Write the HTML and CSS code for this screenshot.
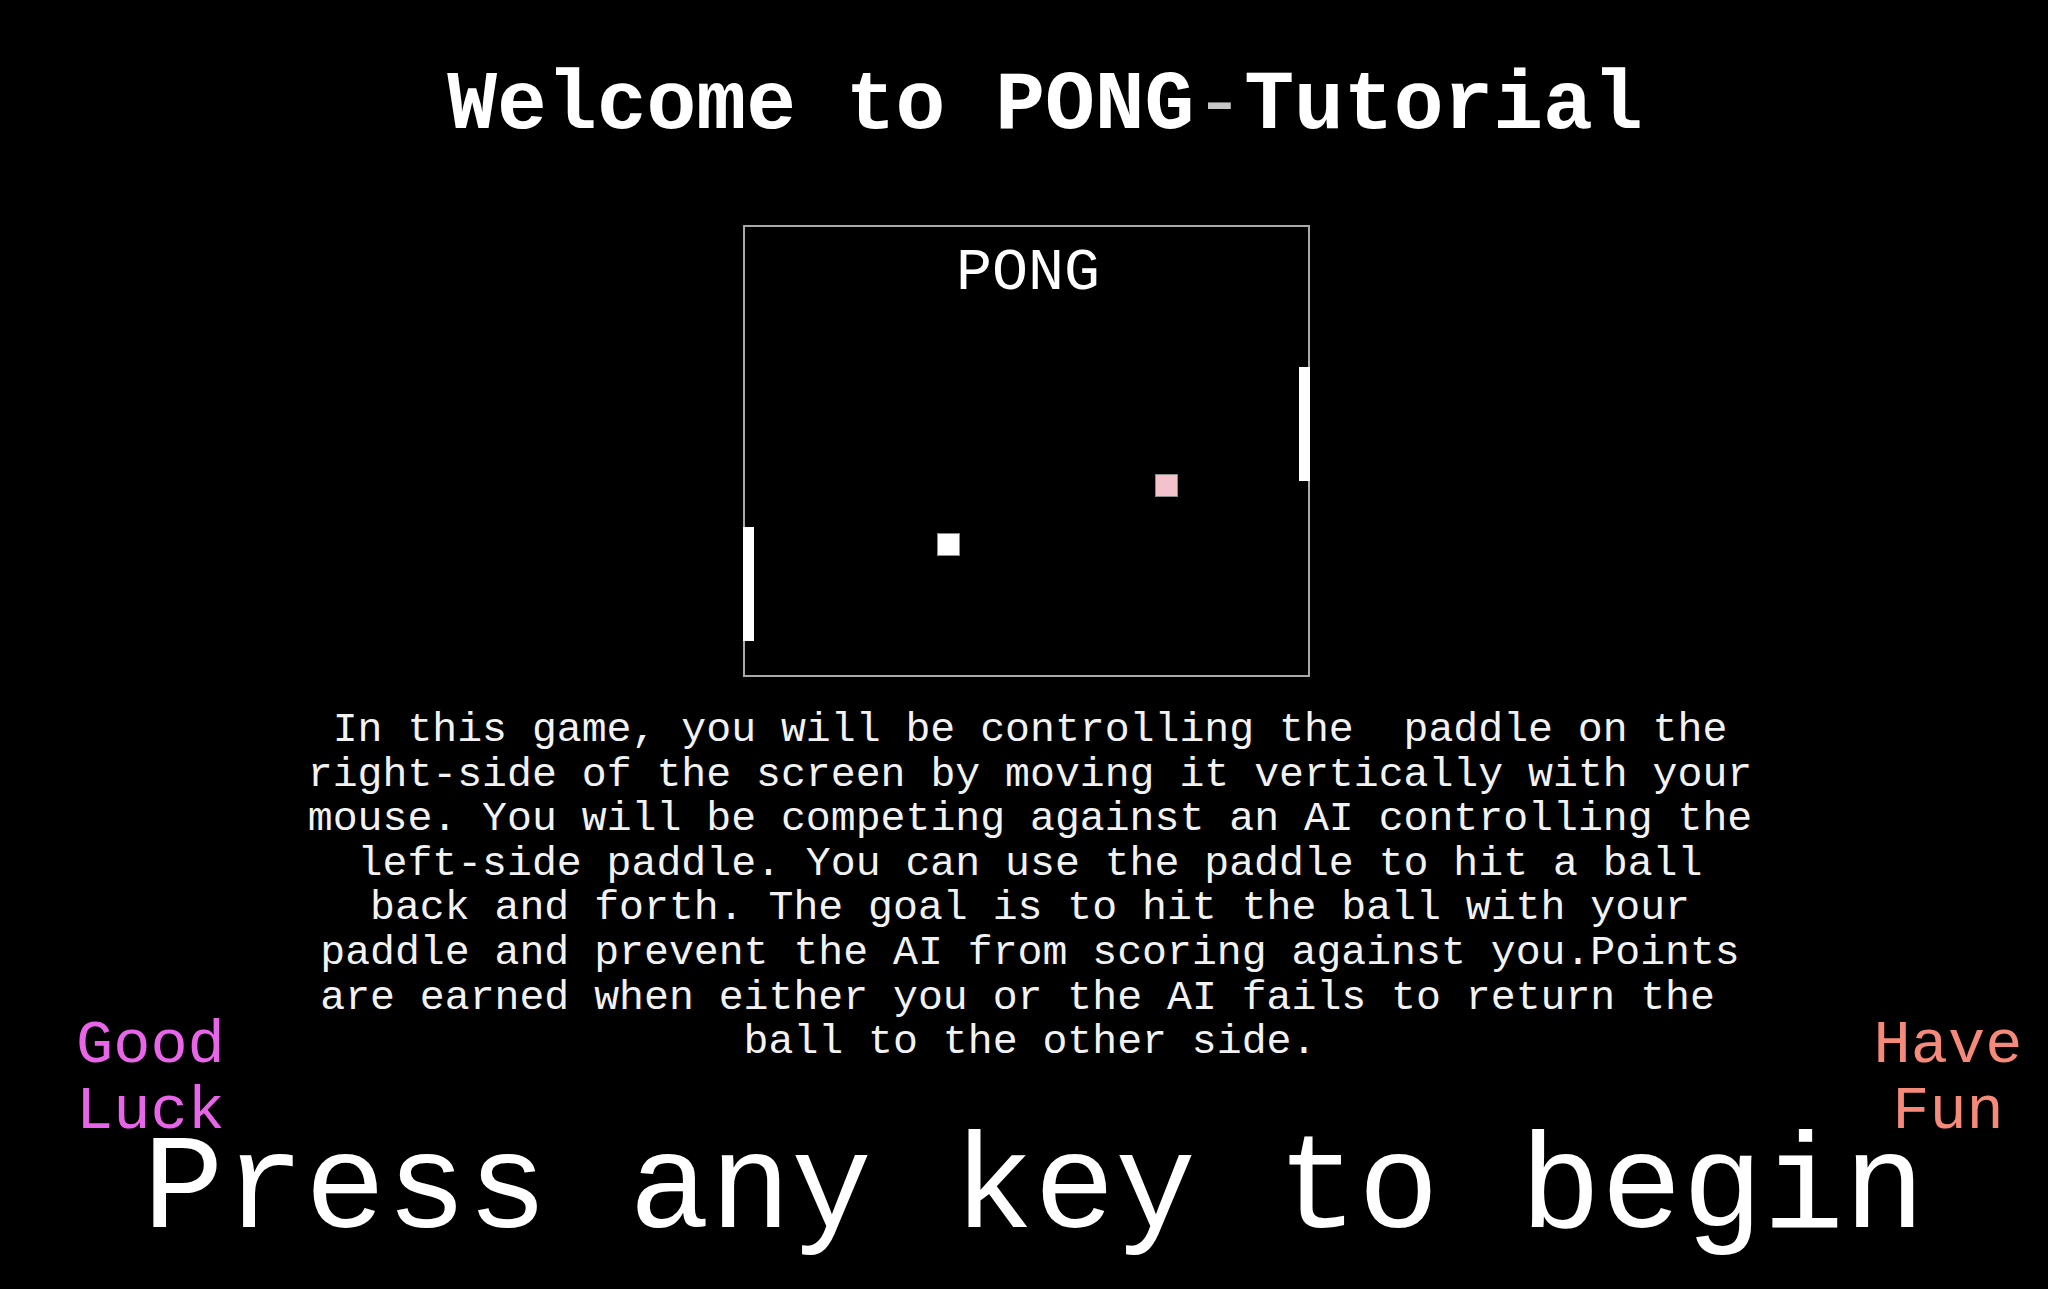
FILE: index.html
```html
<!DOCTYPE html>
<html lang="en">
<head>
<meta charset="utf-8">
<title>PONG Tutorial</title>
<link rel="stylesheet" href="styles.css">
</head>
<body>
<main class="page">
  <h1 class="title">Welcome to PONG<span class="dash">-</span>Tutorial</h1>
  <div class="court">
    <div class="court-title">PONG</div>
    <div class="paddle paddle-left"></div>
    <div class="paddle paddle-right"></div>
    <div class="ball ball-white"></div>
    <div class="ball ball-pink"></div>
  </div>
  <section class="intro">
    <div class="side side-left">Good Luck</div>
    <p class="desc">In this game, you will be controlling the&nbsp; paddle on the right-side of the screen by moving it vertically with your mouse. You will be competing against an AI controlling the left-side paddle. You can use the paddle to hit a ball back and forth. The goal is to hit the ball with your paddle and prevent the AI from scoring against you.Points are earned when either you or the AI fails to return the&nbsp; ball to the other side.</p>
    <div class="side side-right">Have Fun</div>
  </section>
  <div class="start">Press any key to begin</div>
</main>
</body>
</html>
```

FILE: styles.css
```css
html, body {
  margin: 0;
  padding: 0;
  background: #000;
}

body {
  color: #fff;
  font-family: "Liberation Mono", "Courier New", monospace;
  overflow: hidden;
}

.page {
  width: 2048px;
  height: 1289px;
  display: flex;
  flex-direction: column;
  align-items: center;
}

.title {
  margin: 59px 0 0 0;
  padding-left: 42px;
  font-size: 83px;
  font-weight: bold;
  line-height: 94px;
  white-space: nowrap;
}

.dash {
  font-weight: normal;
  color: #c8c8c8;
}

.court {
  position: relative;
  margin-top: 72px;
  margin-left: 5px;
  width: 567px;
  height: 452px;
  box-sizing: border-box;
  box-shadow: inset 0 0 0 2px #a9a9a9;
}

.court-title {
  text-align: center;
  font-size: 60px;
  line-height: 68px;
  margin-top: 14px;
  padding-left: 3px;
}

.paddle {
  position: absolute;
  width: 11px;
  height: 114px;
  background: #fff;
}

.paddle-left {
  left: 0;
  top: 302px;
}

.paddle-right {
  left: 556px;
  top: 142px;
}

.ball {
  position: absolute;
  width: 21px;
  height: 21px;
  border: 1px solid #8a8a8a;
}

.ball-white {
  left: 194px;
  top: 308px;
  background: #fff;
}

.ball-pink {
  left: 412px;
  top: 249px;
  background: #f4c2cc;
}

.intro {
  width: 2048px;
  margin-top: 31px;
  display: grid;
  grid-template-columns: 1fr 1470px 1fr;
  align-items: end;
}

.desc {
  margin: 0;
  padding-left: 12px;
  font-size: 41.5px;
  line-height: 44.6px;
  text-align: center;
  color: #f2f2f2;
}

.side {
  font-size: 62px;
  line-height: 66px;
  margin-bottom: -80px;
}

.side-left {
  justify-self: start;
  padding-left: 76px;
  width: 160px;
  color: #e864e8;
}

.side-right {
  justify-self: end;
  width: 184px;
  margin-right: 8px;
  text-align: center;
  color: #f58a7a;
}

.start {
  margin-top: 74px;
  padding-left: 20px;
  font-size: 135px;
  line-height: 105px;
  white-space: nowrap;
}
```
